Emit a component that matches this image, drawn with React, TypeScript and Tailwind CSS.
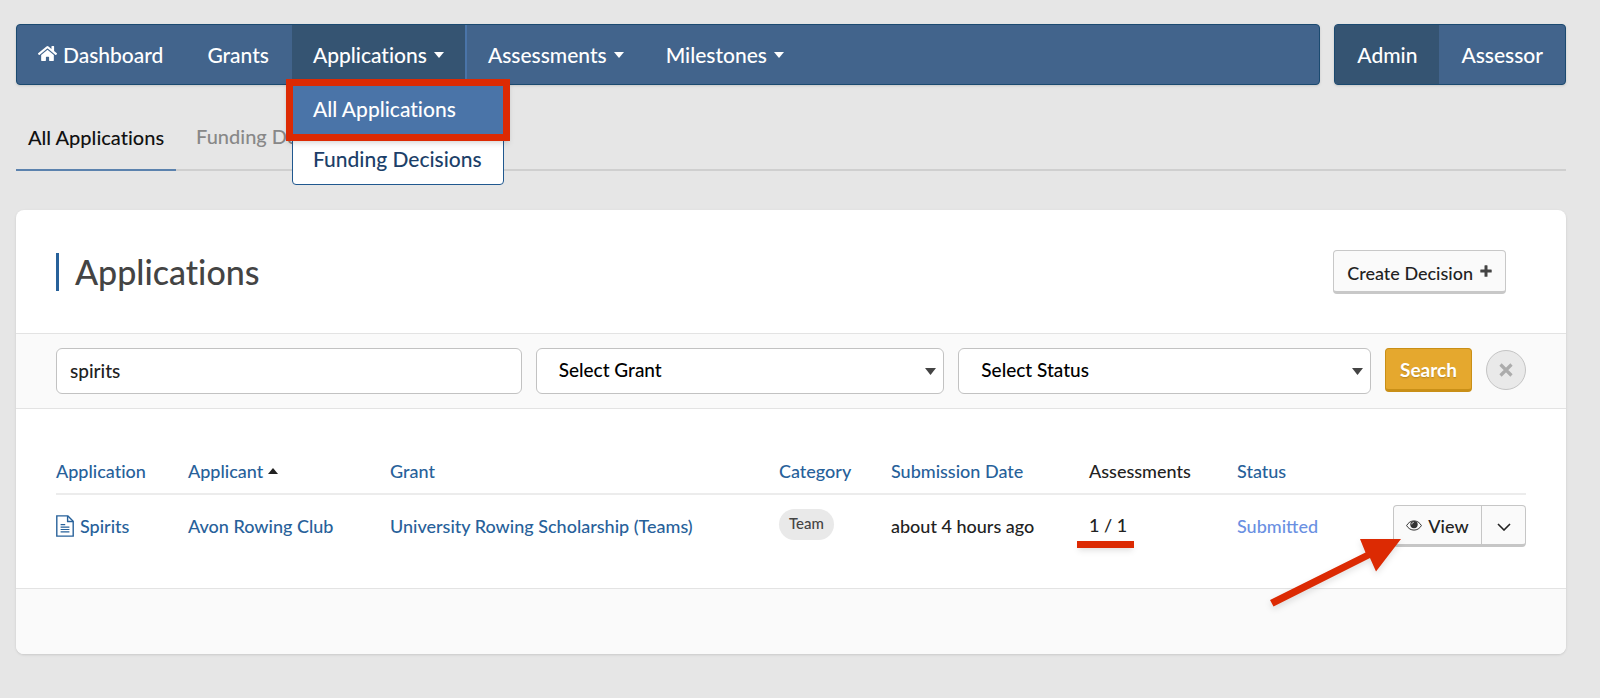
import React from 'react';
import { FaHome } from 'react-icons/fa';

type IconProps = { className?: string };

const CaretDown: React.FC<IconProps> = ({ className }) => (
  <svg viewBox="0 0 10 6" preserveAspectRatio="none" className={className} fill="currentColor" aria-hidden="true">
    <path d="M0 0h10L5 6z" />
  </svg>
);

const CaretUp: React.FC<IconProps> = ({ className }) => (
  <svg viewBox="0 0 10 6" className={className} fill="currentColor" aria-hidden="true">
    <path d="M0 6h10L5 0z" />
  </svg>
);

const PlusIcon: React.FC<IconProps> = ({ className }) => (
  <svg viewBox="0 0 12 12" className={className} fill="currentColor" aria-hidden="true">
    <path d="M4.500 .8q0-.5.5-.5h2q.5 0 .5.5v3.700h3.700q.5 0 .5.5v2q0 .5-.5.5H7.500v3.700q0 .5-.5.5H5q-.5 0-.5-.5V7.500H.8q-.5 0-.5-.5V5q0-.5.5-.5h3.700z" />
  </svg>
);

const DocumentIcon: React.FC<IconProps> = ({ className }) => (
  <svg viewBox="0 0 18 22" className={className} fill="none" stroke="currentColor" strokeWidth="1.4" aria-hidden="true">
    <path d="M.8.9h11.1l5.3 5.3v14.9H.8z" />
    <path d="M11.6 1v5.5h5.5" />
    <path d="M4.6 9.6h4.6M4.6 12.1h8.8M4.6 14.5h8.8M4.6 16.9h8.8" strokeWidth="1.2" />
  </svg>
);

const EyeIcon: React.FC<IconProps> = ({ className }) => (
  <svg viewBox="0 0 16 11" className={className} aria-hidden="true">
    <path d="M.6 5.6C2.4 2.4 5 .9 8 .9s5.600 1.500 7.400 4.700C13.600 8.600 11 10.100 8 10.100S2.400 8.600.6 5.600z" fill="none" stroke="currentColor" />
    <circle cx="8" cy="4.600" r="3.700" fill="currentColor" />
    <path d="M5.800 4.400c0-1.200.8-2 2-2.100" fill="none" stroke="#fff" strokeWidth=".8" />
  </svg>
);

interface NavItem {
  label: string;
  icon?: boolean;
  menu?: boolean;
}

const navItems: NavItem[] = [
  { label: 'Dashboard', icon: true },
  { label: 'Grants' },
  { label: 'Applications', menu: true },
  { label: 'Assessments', menu: true },
  { label: 'Milestones', menu: true }
];

/** Dropdown under the Applications nav item */
const ApplicationsMenu = () => (
  <ul className="absolute left-0 top-full z-10 w-[212px] rounded-b border border-[#20588f] bg-white">
    <li>
      <a href="#all" className="relative block bg-[#4a74a8] px-5 pb-[13px] pt-[11px] leading-[26px] text-white">
        All Applications
        <span className="pointer-events-none absolute -inset-x-[7px] -top-[6px] -bottom-[6px] border-[7px] border-[#dc2a03] shadow-md" />
      </a>
    </li>
    <li>
      <a href="#decisions" className="block px-5 pb-3 pt-[11px] leading-[26px] text-[#1c3f69]">
        Funding Decisions
      </a>
    </li>
  </ul>
);

const MainNav = () => (
  <nav className="flex flex-1 rounded border border-[#1b4a70] bg-[#42648c] text-[21px] text-white shadow-sm">
    {navItems.map((item) => {
      const active = item.label === 'Applications';
      return (
        <div
          key={item.label}
          className={`relative flex ${active ? 'border-r-2 border-[#4a74a8] bg-[#355472]' : ''}`}
        >
          {item.menu ? (
            <button type="button" className="flex items-center gap-[7px] px-[21px]" aria-expanded={active}>
              {item.label}
              <CaretDown className="h-[6px] w-[10px]" />
            </button>
          ) : (
            <a href={`#${item.label.toLowerCase()}`} className="flex items-center gap-[6px] pl-[21px] pr-[23px]">
              {item.icon && <FaHome className="mb-[3px] size-[19px]" />}
              {item.label}
            </a>
          )}
          {active && <ApplicationsMenu />}
        </div>
      );
    })}
  </nav>
);

const RoleSwitch = () => (
  <nav className="flex overflow-hidden rounded border border-[#1b4a70] bg-[#42648c] text-[21px] text-white shadow-sm">
    <a href="#admin" className="flex items-center bg-[#355472] px-[22px]">Admin</a>
    <a href="#assessor" className="flex items-center px-[22px]">Assessor</a>
  </nav>
);

const FilterSelect = ({ label, className }: { label: string; className: string }) => (
  <div className={`relative ${className}`}>
    <select
      aria-label={label}
      className="h-[46px] w-full appearance-none rounded-md border border-[#c2c2c2] bg-white px-[22px] pb-[2px] text-[19px] text-black"
    >
      <option>{label}</option>
    </select>
    <CaretDown className="pointer-events-none absolute right-2 top-5 h-[7px] w-[11px] text-[#444]" />
  </div>
);

const FilterBar = () => (
  <form className="flex items-start gap-[14px] border-y border-[#e3e3e3] bg-[#fafafa] py-[14px] pl-10 pr-10">
    <div className="min-w-0 flex-[466]">
      <input
        type="text"
        aria-label="Search applications"
        defaultValue="spirits"
        className="h-[46px] w-full rounded-md border border-[#c2c2c2] bg-white px-[13px] pb-[2px] text-[19px] text-[#222]"
      />
    </div>
    <FilterSelect label="Select Grant" className="min-w-0 flex-[409]" />
    <FilterSelect label="Select Status" className="min-w-0 flex-[413]" />
    <button
      type="button"
      className="h-11 w-[87px] rounded border border-b-3 border-[#c98f17] bg-[#e5a82e] pt-[2px] text-[19px] font-bold text-white text-shadow-sm"
    >
      Search
    </button>
    <button
      type="button"
      aria-label="Clear"
      className="mt-[2px] flex size-10 items-center justify-center rounded-full border border-[#c4c4c4] bg-[#e9e9e9] text-[#acacac]"
    >
      <svg viewBox="0 0 14 14" className="size-[14px]" stroke="currentColor" strokeWidth="3.200" aria-hidden="true">
        <path d="M1.500 1.500l11 11M12.500 1.500l-11 11" />
      </svg>
    </button>
  </form>
);

const RowActions = () => (
  <div className="relative ml-auto flex h-[42px] w-[133px] rounded border border-b-3 border-[#c6c6c6] bg-[#fafafa] text-[#222]">
    <button type="button" className="flex flex-1 items-center justify-center gap-[6px] pt-[2px]">
      <EyeIcon className="mb-[2px] h-[11px] w-4 text-[#333]" />
      View
    </button>
    <button type="button" aria-label="More actions" className="flex w-11 items-center justify-center border-l border-[#c6c6c6] pt-1">
      <svg viewBox="0 0 14 8" className="h-2 w-[14px]" fill="none" stroke="currentColor" strokeWidth="1.600" aria-hidden="true">
        <path d="M1 1l6 6 6-6" />
      </svg>
    </button>
    {/* arrow pointing at the View button */}
    <svg
      viewBox="0 0 132 70"
      className="pointer-events-none absolute right-[124px] top-[33px] h-[70px] w-[132px] overflow-visible drop-shadow-md"
      aria-hidden="true"
    >
      <path d="M132 0H91l5.500 13.500L1 61l3.500 6.500L101 19l6 13.500z" fill="#dc2a03" />
    </svg>
  </div>
);

const ApplicationsTable = () => (
  <table className="w-full table-fixed text-left text-lg leading-6 text-[#27619a]">
    <colgroup>
      <col className="w-[132px]" />
      <col className="w-[202px]" />
      <col />
      <col className="w-[112px]" />
      <col className="w-[198px]" />
      <col className="w-[148px]" />
      <col className="w-[120px]" />
      <col className="w-[169px]" />
    </colgroup>
    <thead>
      <tr className="border-b-2 border-[#ececec] [&>th]:pb-[10px] [&>th]:font-medium">
        <th><a href="#application">Application</a></th>
        <th>
          <a href="#applicant" className="flex items-center gap-[5px]">
            Applicant
            <CaretUp className="h-[6px] w-[10px] text-[#222]" />
          </a>
        </th>
        <th><a href="#grant">Grant</a></th>
        <th><a href="#category">Category</a></th>
        <th><a href="#date">Submission Date</a></th>
        <th className="text-[#222]">Assessments</th>
        <th><a href="#status">Status</a></th>
        <th />
      </tr>
    </thead>
    <tbody>
      <tr className="[&>td]:pt-[10px]">
        <td>
          <a href="#spirits" className="flex items-center gap-[6px]">
            <DocumentIcon className="h-[22px] w-[18px]" />
            Spirits
          </a>
        </td>
        <td><a href="#club">Avon Rowing Club</a></td>
        <td><a href="#scholarship">University Rowing Scholarship (Teams)</a></td>
        <td>
          <span className="mb-1 inline-flex h-[31px] items-center rounded-full bg-[#e9e9e9] px-[10px] pb-[2px] text-[15px] text-[#444]">
            Team
          </span>
        </td>
        <td className="text-[#222]">about 4 hours ago</td>
        <td className="pb-[3px] text-[#222]">
          <span className="relative">
            1 / 1
            <span className="absolute -left-3 top-full mt-[5px] h-[7px] w-[57px] bg-[#dc2a03] shadow-md" />
          </span>
        </td>
        <td className="text-[#6a90e2] [font-variant-ligatures:normal]">Submitted</td>
        <td><RowActions /></td>
      </tr>
    </tbody>
  </table>
);

const App: React.FC = () => (
  <div className="min-h-screen bg-[#e6e6e6] pb-11 pl-4 pr-[34px] pt-6 font-['Lato','Open_Sans',sans-serif] font-medium [font-variant-ligatures:none]">
    <header className="flex h-[61px] gap-[14px]">
      <MainNav />
      <RoleSwitch />
    </header>

    <div className="flex h-[86px] items-stretch border-b-2 border-[#cfcfcf] text-xl">
      <a href="#all" className="-mb-[2px] flex items-center border-b-2 border-[#5b82ae] px-3 pt-5 text-[#111]">
        All Applications
      </a>
      <a href="#decisions" className="flex items-center px-5 pt-[18px] text-[#888]">Funding Decisions</a>
    </div>

    <main className="mt-[39px] overflow-hidden rounded-lg bg-white shadow-sm">
      <div className="flex h-[123px] items-center justify-between pl-10 pr-[60px]">
        <h1 className="border-l-3 border-[#27619a] pl-4 text-[34px] leading-[38px] text-[#444]">Applications</h1>
        <button
          type="button"
          className="flex h-11 items-center gap-[7px] rounded border border-b-3 border-[#c8c8c8] bg-[#fafafa] px-[13px] pt-1 text-lg text-[#222]"
        >
          Create Decision
          <PlusIcon className="mb-[3px] size-3 text-[#444]" />
        </button>
      </div>
      <FilterBar />
      <section className="px-10 pb-[41px] pt-[50px]">
        <ApplicationsTable />
      </section>
      <footer className="h-[66px] border-t border-[#e3e3e3] bg-[#fafafa]" />
    </main>
  </div>
);

export default App;
